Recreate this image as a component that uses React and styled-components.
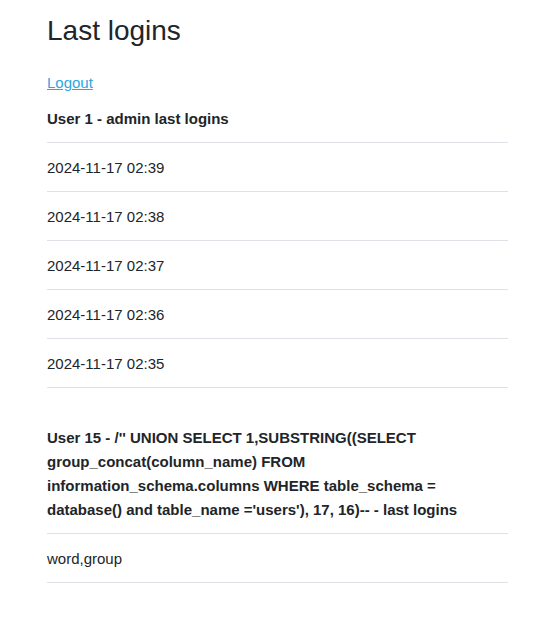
import React from 'react';
import styled, { createGlobalStyle } from 'styled-components';

const GlobalStyle = createGlobalStyle`
  body {
    margin: 0;
    background: #fff;
    color: #212529;
    font-family: "Liberation Sans", Arial, Helvetica, sans-serif;
    font-size: 15px;
    line-height: 24px;
  }
`;

const Page = styled.div`
  width: 461px;
  padding: 14px 0 40px 47px;
`;

const Title = styled.h1`
  margin: 0 0 23px;
  font-size: 28px;
  font-weight: normal;
  line-height: 1.2;
`;

const LogoutRow = styled.div`
  height: 23px;
`;

const LogoutLink = styled.a`
  color: #2ba6e1;
  text-decoration: underline;
`;

const Table = styled.table`
  width: 100%;
  border-collapse: collapse;
  margin-bottom: ${({ $last }) => ($last ? '0' : '25px')};
`;

const HeadCell = styled.th`
  padding: 13px 0 11px;
  text-align: left;
  font-weight: bold;
`;

const Cell = styled.td`
  padding: 13px 0 11px;
  border-top: 1px solid #dee2e6;
  border-bottom: 1px solid #dee2e6;
`;

const users = [
  {
    title: 'User 1 - admin last logins',
    rows: ['2024-11-17 02:39', '2024-11-17 02:38', '2024-11-17 02:37', '2024-11-17 02:36', '2024-11-17 02:35'],
  },
  {
    title: "User 15 - /'' UNION SELECT 1,SUBSTRING((SELECT group_concat(column_name) FROM information_schema.columns WHERE table_schema = database() and table_name ='users'), 17, 16)-- - last logins",
    rows: ['word,group'],
  },
];

function App() {
  return (
    <Page>
      <GlobalStyle />
      <Title>Last logins</Title>
      <LogoutRow>
        <LogoutLink href="#">Logout</LogoutLink>
      </LogoutRow>
      {users.map((u, i) => (
        <Table key={i} $last={i === users.length - 1}>
          <thead>
            <tr>
              <HeadCell>{u.title}</HeadCell>
            </tr>
          </thead>
          <tbody>
            {u.rows.map((r, j) => (
              <tr key={j}>
                <Cell>{r}</Cell>
              </tr>
            ))}
          </tbody>
        </Table>
      ))}
    </Page>
  );
}

export default App;
